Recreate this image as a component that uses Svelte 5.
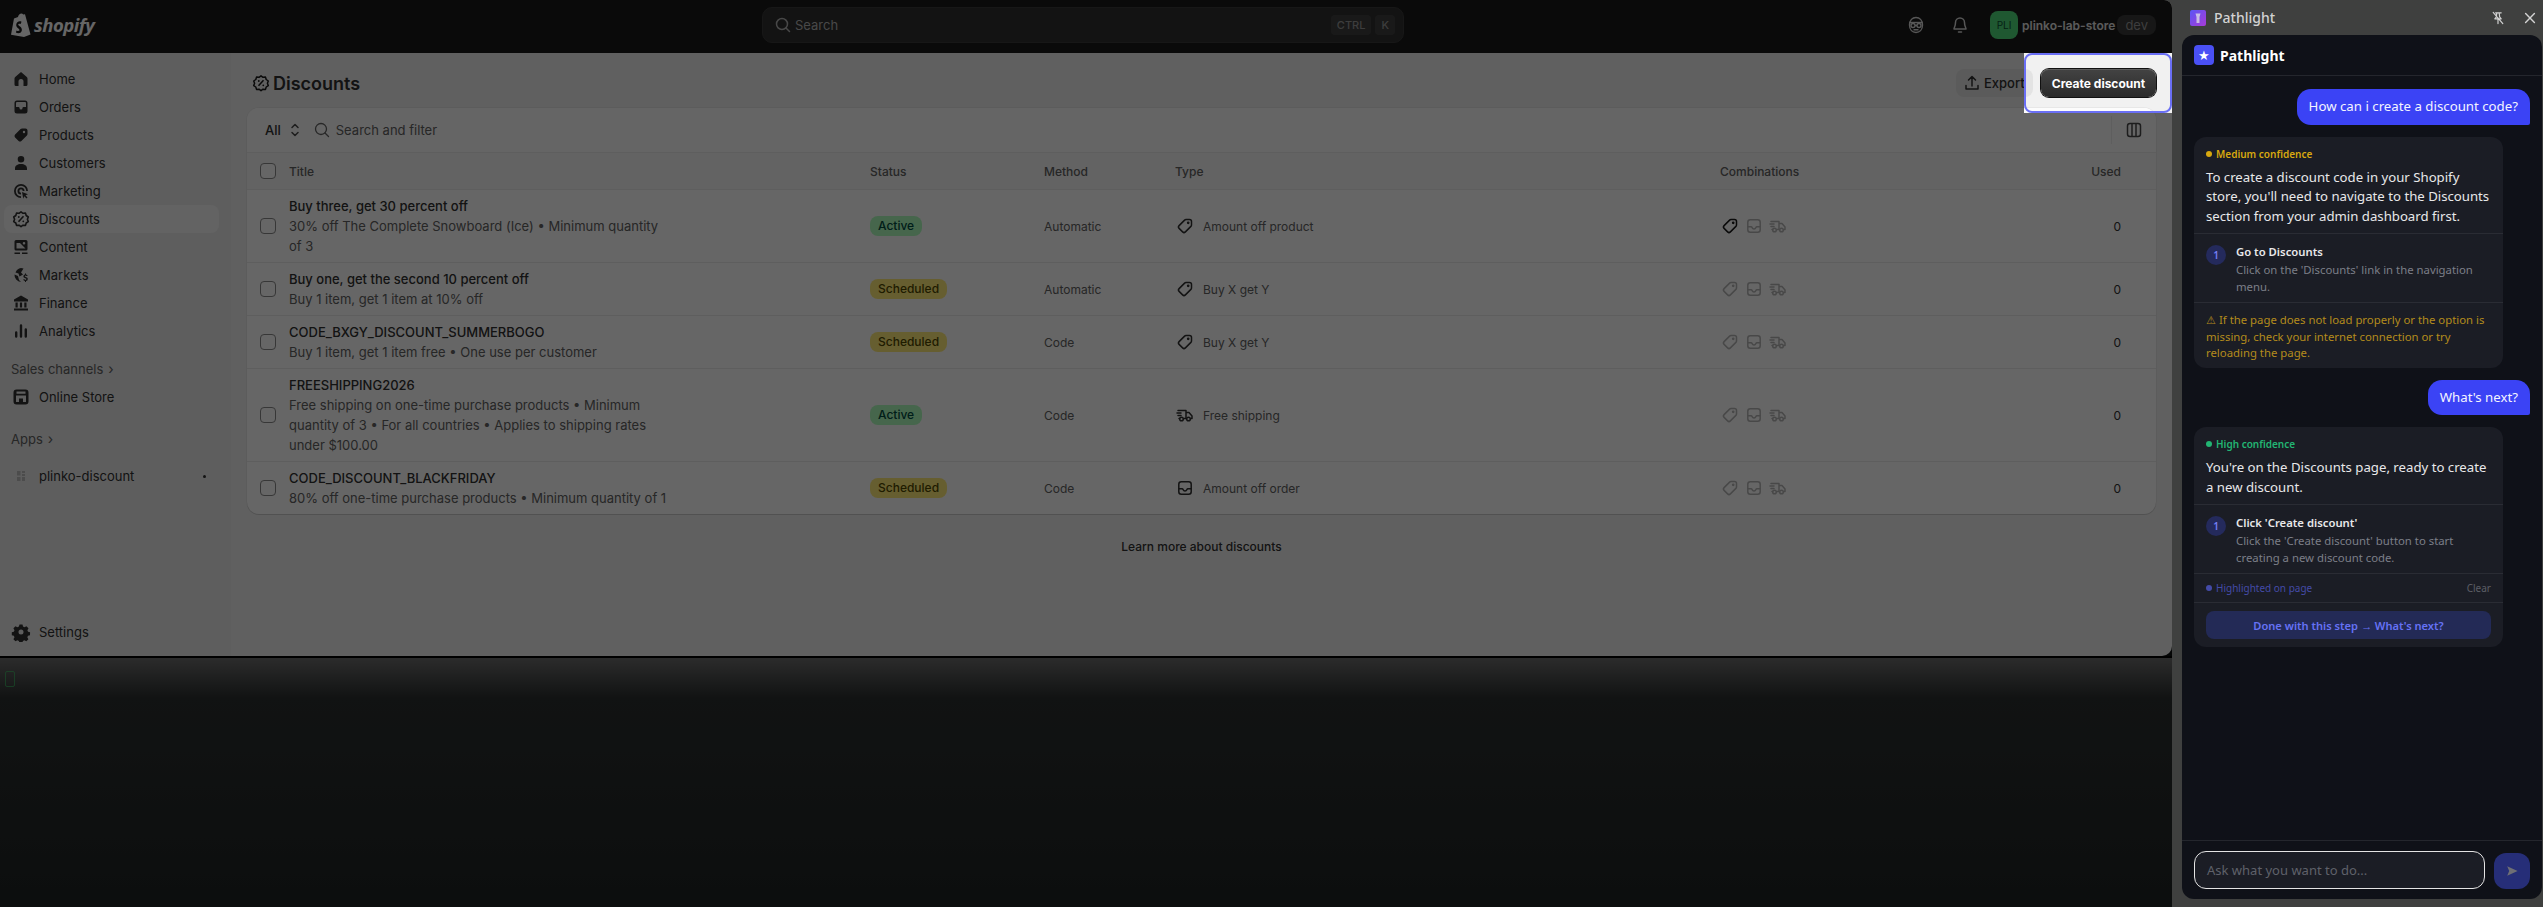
<script>
	const icons = {
		home: 'M10 3 4.2 7.9Q3.5 8.5 3.5 9.5v6Q3.5 17 5 17h2.5v-4.5a2.5 2.5 0 0 1 5 0V17H15q1.5 0 1.5-1.5v-6q0-1-.7-1.6Z',
		orders: 'M6 3.5h8A2.5 2.5 0 0 1 16.5 6v8a2.5 2.5 0 0 1-2.5 2.5H6A2.5 2.5 0 0 1 3.5 14V6A2.5 2.5 0 0 1 6 3.5ZM5 6v4h2.5a1 1 0 0 1 1 1 1.5 1.5 0 0 0 3 0 1 1 0 0 1 1-1H15V6a1 1 0 0 0-1-1H6a1 1 0 0 0-1 1Z',
		products: 'M11 3.5h3.5a2 2 0 0 1 2 2V9a2 2 0 0 1-.6 1.4l-5.5 5.5a2 2 0 0 1-2.8 0l-3.5-3.5a2 2 0 0 1 0-2.8l5.5-5.5A2 2 0 0 1 11 3.5Zm2 2.3a1.2 1.2 0 1 0 0 2.4 1.2 1.2 0 0 0 0-2.4Z',
		customers: 'M10 3a3.3 3.3 0 1 1 0 6.6A3.3 3.3 0 0 1 10 3ZM4 15.5c0-2.8 2.4-4.5 6-4.5s6 1.700 6 4.500V17H4Z',
		marketing: 'M10 3a7 7 0 0 1 7 7h-1.800A5.200 5.200 0 1 0 10 15.200V17a7 7 0 0 1 0-14Zm0 3.500A3.500 3.500 0 0 1 13.500 10h-1.800A1.700 1.700 0 1 0 10 11.700v1.800a3.500 3.500 0 0 1 0-7Zm1 4.500 6 2.200-2.500 1 2 2.300-1 1-2.200-2.200-1 2.500Z',
		discounts: 'M10 2.800 12 4.300 14.500 4.100 15.200 6.500 17.300 8 16.400 10.300 17.300 12.600 15.200 14 14.500 16.400 12 16.200 10 17.700 8 16.200 5.500 16.400 4.800 14 2.700 12.600 3.600 10.300 2.700 8 4.800 6.500 5.500 4.100 8 4.300Z',
		content: 'M5 3h10a1.500 1.500 0 0 1 1.500 1.500V12a1.500 1.500 0 0 1-1.500 1.500H5A1.500 1.500 0 0 1 3.500 12V4.500A1.500 1.500 0 0 1 5 3Zm8 2a1.300 1.300 0 1 0 0 2.600A1.300 1.300 0 0 0 13 5ZM5.500 6v5.500h9L9 6ZM3.500 15.500h5.500V17H3.500Zm7.500 0h5.500V17H11Z',
		markets: 'M10 3a7 7 0 0 1 2.500.5L10 7.500l2 2-3.500 2-1-3-3-1A7 7 0 0 1 10 3ZM3.500 9.500 7 11l1 4 2 2a7 7 0 0 1-6.500-7.500ZM15 8.500v1a2 2 0 0 1 1.700 1.500h-1.300a.8.800 0 0 0-1.500.300c0 1 2.900.800 2.900 2.700a2 2 0 0 1-1.800 2v1H14v-1a2.100 2.100 0 0 1-1.800-1.700h1.300c.4.900 1.900.800 1.900-.200s-3-.800-3-2.800a2 2 0 0 1 1.600-1.800v-1Z',
		finance: 'M10 2.500l7 4v2H3v-2ZM4.500 9.500h2.200v5H4.500Zm4.400 0h2.200v5H8.900Zm4.400 0h2.200v5h-2.200ZM3 15.500h14V17.500H3Z',
		analytics: 'M4 11.500a1.200 1.200 0 0 1 2.400 0v4a1.200 1.200 0 0 1-2.400 0Zm4.800-7a1.200 1.200 0 0 1 2.400 0v11a1.200 1.200 0 0 1-2.400 0Zm4.800 4a1.200 1.200 0 0 1 2.400 0v7a1.200 1.200 0 0 1-2.400 0Z',
		settings: 'M8.500 2.500h3l.5 2.100 1.500.7 1.900-1.100 2.100 2.100-1.100 1.900.7 1.600 2 .5-.1 3-2 .5-.7 1.500 1.100 1.900-2.100 2.100-1.900-1.100-1.500.7-.5 2h-3l-.5-2-1.500-.7-1.900 1.100-2.100-2.100 1.100-1.900-.7-1.500-2-.5v-3l2-.5.700-1.600-1.100-1.900 2.100-2.100 1.900 1.100 1.500-.7ZM10 7.500a2.500 2.500 0 1 0 0 5 2.500 2.500 0 0 0 0-5Z',
		store: 'M5.500 2.500h9a3 3 0 0 1 3 3v9a3 3 0 0 1-3 3h-9a3 3 0 0 1-3-3v-9a3 3 0 0 1 3-3Zm0 2V6.700h9V4.500Zm-.500 4v6.500h3V11.500h4V15h3V8.500Z'
	};

	const nav = [
		['Home', 'home'], ['Orders', 'orders'], ['Products', 'products'], ['Customers', 'customers'], ['Marketing', 'marketing'],
		['Discounts', 'discounts'], ['Content', 'content'], ['Markets', 'markets'], ['Finance', 'finance'], ['Analytics', 'analytics']
	];

	const discounts = [
		{ title: 'Buy three, get 30 percent off', desc: '30% off The Complete Snowboard (Ice) • Minimum quantity of 3', status: 'Active', method: 'Automatic', type: 'Amount off product', icon: 'tag', on: true },
		{ title: 'Buy one, get the second 10 percent off', desc: 'Buy 1 item, get 1 item at 10% off', status: 'Scheduled', method: 'Automatic', type: 'Buy X get Y', icon: 'tag' },
		{ title: 'CODE_BXGY_DISCOUNT_SUMMERBOGO', desc: 'Buy 1 item, get 1 item free • One use per customer', status: 'Scheduled', method: 'Code', type: 'Buy X get Y', icon: 'tag' },
		{ title: 'FREESHIPPING2026', desc: 'Free shipping on one-time purchase products • Minimum quantity of 3 • For all countries • Applies to shipping rates under $100.00', status: 'Active', method: 'Code', type: 'Free shipping', icon: 'truck' },
		{ title: 'CODE_DISCOUNT_BLACKFRIDAY', desc: '80% off one-time purchase products • Minimum quantity of 1', status: 'Scheduled', method: 'Code', type: 'Amount off order', icon: 'box' }
	];
</script>

{#snippet glyph(name)}
	<svg class="glyph" viewBox="0 0 20 20" fill="none" stroke="currentColor" stroke-width="1.5" stroke-linecap="round" stroke-linejoin="round">
		{#if name === 'tag'}
			<path d="M11 3.500h3.500a2 2 0 0 1 2 2V9a2 2 0 0 1-.6 1.400l-5.500 5.500a2 2 0 0 1-2.800 0l-3.500-3.500a2 2 0 0 1 0-2.800l5.500-5.500A2 2 0 0 1 11 3.500Z" />
			<circle cx="13.200" cy="6.800" r=".6" />
		{:else if name === 'box'}
			<rect x="3.800" y="3.800" width="12.400" height="12.400" rx="2.500" />
			<path d="M4 10.800h3c.8 0 1 .5 1.200 1 .3.800 1 1.200 1.800 1.200s1.500-.4 1.800-1.200c.2-.5.4-1 1.200-1h3" />
		{:else}
			<path d="M3 5.500h8v8M2 8h4M3 10.500h3M11 7.500h3l3 3.500v2.500h-1M11 13.500H9M4.500 13.500H4" />
			<circle cx="6.500" cy="14" r="1.800" />
			<circle cx="13.500" cy="14" r="1.800" />
		{/if}
	</svg>
{/snippet}

<div class="screen">
	<div class="desk">
		<div class="win">
			<header class="topbar">
				<div class="logo">
					<svg class="bag" viewBox="0 0 20 24">
						<path fill="#fff" d="M3 5.500 7 4c.5-2 1.800-3.500 3.500-3.500.7 0 1.300.3 1.700 1l1.800-.2L19.500 21.500 13 24 0 21.800Z" />
						<path fill="#1a1a1a" d="M10.500 8.800 9.700 11c-.8-.4-2.500-.6-2.500.6 0 1.400 3.700 2 3.700 5.300 0 2.800-3.400 4.300-6 2.700l.6-2.200c1 .7 2.900 1 3-.3 0-1.700-3.300-1.900-3.300-5 0-3 3.300-4.600 5.300-3.300Z" />
					</svg>
					<span class="wordmark">shopify</span>
				</div>
				<div class="search">
					<svg class="s-icon" viewBox="0 0 20 20" fill="none" stroke="currentColor" stroke-width="1.500" stroke-linecap="round"><circle cx="9" cy="9" r="5.500" /><path d="m13 13 3.500 3.500" /></svg>
					<span>Search</span>
					<kbd class="ctrl">CTRL</kbd>
					<kbd>K</kbd>
				</div>
				<div class="account">
					<svg class="top-ic" viewBox="0 0 20 20" fill="none" stroke="currentColor" stroke-width="1.400" stroke-linejoin="round"><path d="M10 2.500c3.500 0 6.500 2.500 6.500 7.500s-3 7.500-6.500 7.500S3.500 15 3.500 10 6.500 2.500 10 2.500Z" /><path d="M3.500 7.500h13" /><circle cx="7" cy="10.500" r="2" /><circle cx="13" cy="10.500" r="2" /><path d="M9 10.500h2M7.500 14.800h5" /></svg>
					<svg class="top-ic bell" viewBox="0 0 20 20" fill="none" stroke="currentColor" stroke-width="1.500" stroke-linecap="round" stroke-linejoin="round"><path d="M10 3a4.500 4.500 0 0 0-4.500 4.500c0 4-1.500 5-1.500 6.500h12c0-1.500-1.500-2.500-1.500-6.500A4.500 4.500 0 0 0 10 3ZM8.500 17h3" /></svg>
					<span class="avatar">PLI</span>
					<span class="store">plinko-lab-store</span>
					<span class="dev">dev</span>
				</div>
			</header>
			<div class="body">
				<aside class="sidebar">
					{#each nav as [label, icon]}
						<div class="nav-item" class:active={label === 'Discounts'}>
							{#if icon === 'discounts'}
								<svg class="nav-ic" viewBox="0 0 20 20" fill="none" stroke="currentColor" stroke-width="1.600" stroke-linejoin="round"><path d={icons[icon]} /><path d="m7.500 12.800 5-5.500" /><circle cx="7.800" cy="8" r=".9" fill="currentColor" stroke="none" /><circle cx="12.300" cy="12.300" r=".9" fill="currentColor" stroke="none" /></svg>
							{:else}
								<svg class="nav-ic" viewBox="0 0 20 20" fill="currentColor" fill-rule="evenodd"><path d={icons[icon]} /></svg>
							{/if}
							{label}
						</div>
					{/each}
					<div class="side-label first">Sales channels <span class="chev">›</span></div>
					<div class="nav-item">
						<svg class="nav-ic" viewBox="0 0 20 20" fill="currentColor" fill-rule="evenodd"><path d={icons.store} /></svg>
						Online Store
					</div>
					<div class="side-label">Apps <span class="chev">›</span></div>
					<div class="nav-item app">
						<svg class="nav-ic faint" viewBox="0 0 20 20" fill="currentColor"><path d="M6 5h3.500v4.500H6Zm5 0h3v2h-3Zm0 3h3v2h-3ZM6 11h3.500v4H6Zm5 0h3v4h-3Z" /></svg>
						plinko-discount
						<span class="app-dot"></span>
					</div>
					<div class="nav-item settings">
						<svg class="nav-ic" viewBox="0 0 20 20" fill="currentColor" fill-rule="evenodd"><path d={icons.settings} /></svg>
						Settings
					</div>
				</aside>
				<main class="main">
					<div class="page-head">
						<svg class="title-ic" viewBox="0 0 20 20" fill="none" stroke="currentColor" stroke-width="1.500" stroke-linejoin="round"><path d={icons.discounts} /><path d="m7.500 12.800 5-5.500" /><circle cx="7.800" cy="8" r=".9" fill="currentColor" stroke="none" /><circle cx="12.300" cy="12.300" r=".9" fill="currentColor" stroke="none" /></svg>
						<h1>Discounts</h1>
						<button class="export">
							<svg viewBox="0 0 20 20" fill="none" stroke="currentColor" stroke-width="1.500" stroke-linecap="round" stroke-linejoin="round"><path d="M10 13V3.500M6.500 7 10 3.500 13.500 7M4 12.500V16h12v-3.500" /></svg>
							Export
						</button>
						<button class="create">Create discount</button>
					</div>
					<section class="card">
						<div class="filters">
							<span class="all">All</span>
							<svg class="sort" viewBox="0 0 20 20" fill="none" stroke="currentColor" stroke-width="1.500" stroke-linecap="round" stroke-linejoin="round"><path d="m7 7.500 3-3 3 3M7 12.500l3 3 3-3" /></svg>
							<svg class="f-search" viewBox="0 0 20 20" fill="none" stroke="currentColor" stroke-width="1.300" stroke-linecap="round"><circle cx="9" cy="9" r="5.500" /><path d="m13 13 3.500 3.500" /></svg>
							<span class="placeholder">Search and filter</span>
							<span class="f-div"></span>
							<svg class="cols" viewBox="0 0 20 20" fill="none" stroke="currentColor" stroke-width="1.500"><rect x="3.500" y="3.500" width="13" height="13" rx="2.500" /><path d="M8 3.500v13M12 3.500v13" /></svg>
						</div>
						<div class="row head">
							<span class="box"></span>
							<span>Title</span>
							<span>Status</span>
							<span>Method</span>
							<span>Type</span>
							<span>Combinations</span>
							<span class="used">Used</span>
						</div>
						{#each discounts as d}
							<div class="row">
								<span class="box"></span>
								<div class="info">
									<div class="d-title">{d.title}</div>
									<div class="d-desc">{d.desc}</div>
								</div>
								<div><span class="badge {d.status.toLowerCase()}">{d.status}</span></div>
								<div class="muted">{d.method}</div>
								<div class="type">{@render glyph(d.icon)}{d.type}</div>
								<div class="combos">
									<span class:on={d.on}>{@render glyph('tag')}</span>
									<span>{@render glyph('box')}</span>
									<span>{@render glyph('truck')}</span>
								</div>
								<div class="used count">0</div>
							</div>
						{/each}
					</section>
					<div class="learn">Learn more about discounts</div>
				</main>
			</div>
		</div>
		<div class="backdrop">
			<span class="term"></span>
		</div>
		<div class="overlay"></div>
		<div class="ring"></div>
	</div>

	<aside class="panel">
		<div class="panel-bar">
			<span class="app-ic">
				<svg viewBox="0 0 16 16" fill="#d9d9e6"><path d="M5.500 3.500h5L9.500 7v6h-3V7Z" opacity=".8" /></svg>
			</span>
			<span class="app-name">Pathlight</span>
			<svg class="pin" viewBox="0 0 20 20" fill="none" stroke="currentColor" stroke-width="1.500" stroke-linecap="round" stroke-linejoin="round"><path d="M7 3.500h7M8.500 3.500l-.5 5-2 2.500h8l-2-2.500-.5-5M10 11v6M4 3l12 14" /></svg>
			<svg class="close" viewBox="0 0 20 20" fill="none" stroke="currentColor" stroke-width="1.800" stroke-linecap="round"><path d="m4.500 4.500 11 11m0-11-11 11" /></svg>
		</div>
		<div class="chat">
			<div class="chat-head">
				<span class="star">★</span>
				<strong>Pathlight</strong>
			</div>
			<div class="messages">
				<div class="bubble">How can i create a discount code?</div>
				<div class="reply">
					<div class="reply-top">
						<div class="conf medium"><i></i>Medium confidence</div>
						<p>To create a discount code in your Shopify store, you'll need to navigate to the Discounts section from your admin dashboard first.</p>
					</div>
					<div class="step">
						<span class="num">1</span>
						<div>
							<div class="step-title">Go to Discounts</div>
							<div class="step-desc">Click on the 'Discounts' link in the navigation menu.</div>
						</div>
					</div>
					<div class="warn">⚠ If the page does not load properly or the option is missing, check your internet connection or try reloading the page.</div>
				</div>
				<div class="bubble">What's next?</div>
				<div class="reply">
					<div class="reply-top">
						<div class="conf high"><i></i>High confidence</div>
						<p>You're on the Discounts page, ready to create a new discount.</p>
					</div>
					<div class="step">
						<span class="num">1</span>
						<div>
							<div class="step-title">Click 'Create discount'</div>
							<div class="step-desc">Click the 'Create discount' button to start creating a new discount code.</div>
						</div>
					</div>
					<div class="lit"><i></i>Highlighted on page<span>Clear</span></div>
					<div class="done-wrap"><button class="done">Done with this step → What's next?</button></div>
				</div>
			</div>
			<div class="composer">
				<div class="input">Ask what you want to do...</div>
				<button class="send" aria-label="Send">
					<svg viewBox="0 0 20 20" fill="currentColor"><path d="M4 4 17 10 4 16 6.500 10Z" /></svg>
				</button>
			</div>
		</div>
	</aside>
</div>

<style>
	:global(body) {
		margin: 0;
		background: #3f403f;
	}

	.screen {
		display: flex;
		width: 2543px;
		height: 907px;
		overflow: hidden;
		font-family: Inter, "Liberation Sans", sans-serif;
		font-size: 13px;
		color: #303030;
	}

	.desk {
		position: relative;
		display: flex;
		flex-direction: column;
		flex: 0 0 2172px;
		background: #0d0f0f;
		border-radius: 0 8px 0 0;
		overflow: hidden;
	}

	.win {
		display: flex;
		flex-direction: column;
		height: 656px;
		background: #f1f1f1;
		border-radius: 0 0 10px 0;
		overflow: hidden;
	}

	.topbar {
		display: flex;
		align-items: center;
		flex: 0 0 53px;
		box-sizing: border-box;
		padding-bottom: 3px;
		background: #1a1a1a;
		color: #e3e3e3;
	}

	.logo {
		display: flex;
		align-items: center;
		gap: 3px;
		flex: 0 0 762px;
		padding-left: 11px;
		box-sizing: border-box;
		color: #fff;
	}

	.bag {
		width: 20px;
		height: 24px;
	}

	.wordmark {
		font-family: "Open Sans", sans-serif;
		font-size: 18.500px;
		font-weight: 700;
		font-style: italic;
		letter-spacing: -0.5px;
		position: relative;
		top: -1px;
	}

	.search {
		display: flex;
		align-items: center;
		gap: 2px;
		flex: 0 0 642px;
		height: 36px;
		box-sizing: border-box;
		padding: 0 8px 0 10px;
		border: 1px solid #3a3a3a;
		border-radius: 10px;
		background: #303030;
		color: #b5b5b5;
	}

	.s-icon {
		width: 20px;
		height: 20px;
	}

	.search kbd {
		font: 500 11px Inter, sans-serif;
		background: #404040;
		border-radius: 4px;
		padding: 4px 6px;
		margin-left: 2px;
		color: #999;
		height: 12px;
		line-height: 12px;
	}

	.search .ctrl {
		margin-left: auto;
	}

	.account {
		display: flex;
		align-items: center;
		flex: 1;
		min-width: 0;
		padding-right: 16px;
	}

	.top-ic {
		flex: none;
		width: 20px;
		height: 20px;
		margin-left: 502px;
		color: #d9d9d9;
	}

	.top-ic.bell {
		margin-left: 24px;
	}

	.avatar {
		display: flex;
		align-items: center;
		justify-content: center;
		flex: none;
		width: 28px;
		height: 28px;
		margin-left: 20px;
		border-radius: 8px;
		background: #4fdc7c;
		font-size: 10px;
		color: #0c5132;
	}

	.store {
		margin-left: 4px;
		font-weight: 600;
		font-size: 12px;
		white-space: nowrap;
		color: #e3e3e3;
	}

	.dev {
		flex: none;
		margin-left: auto;
		padding: 0 8px;
		height: 20px;
		line-height: 20px;
		border-radius: 8px;
		background: #3a3a3a;
		color: #999;
		font-size: 13px;
	}

	.body {
		display: flex;
		flex: 1;
		min-height: 0;
	}

	.sidebar {
		display: flex;
		flex-direction: column;
		flex: 0 0 231px;
		box-sizing: border-box;
		padding: 12px 12px 10px 4px;
		background: #ebebeb;
	}

	.nav-item {
		position: relative;
		display: flex;
		align-items: center;
		gap: 8px;
		flex: 0 0 28px;
		padding-left: 7px;
		border-radius: 8px;
	}

	.nav-item.active {
		background: #f7f7f7;
	}

	.nav-ic {
		width: 20px;
		height: 20px;
		color: #303030;
	}

	.nav-ic.faint {
		color: #bdbdbd;
	}

	.side-label {
		display: flex;
		align-items: center;
		gap: 5px;
		height: 20px;
		margin: 18px 0 4px 7px;
		font-size: 13px;
		color: #616161;
	}

	.side-label.first {
		margin-top: 14px;
	}

	.side-label + .nav-item.app {
		margin-top: 9px;
	}

	.chev {
		font-size: 14px;
		line-height: 1;
	}

	.app-dot {
		position: absolute;
		left: 199px;
		top: 13px;
		width: 3px;
		height: 3px;
		border-radius: 50%;
		background: #303030;
	}

	.settings {
		margin-top: auto;
	}

	.main {
		flex: 1;
		padding: 0 16px;
		min-width: 0;
	}

	.page-head {
		display: flex;
		align-items: center;
		height: 55px;
		padding: 16px 0 11px 4px;
		box-sizing: border-box;
	}

	.title-ic {
		width: 20px;
		height: 20px;
		color: #1a1a1a;
	}

	h1 {
		margin: 0 auto 0 2px;
		font-size: 18px;
		font-weight: 600;
		color: #303030;
	}

	button {
		font-family: inherit;
		border: 0;
	}

	.export {
		display: flex;
		align-items: center;
		gap: 2px;
		width: 77px;
		height: 28px;
		padding: 0 0 0 6px;
		border-radius: 8px;
		background: #e3e3e3;
		color: #303030;
		font-size: 13px;
		font-weight: 500;
	}

	.export svg {
		width: 20px;
		height: 20px;
	}

	.create {
		width: 115px;
		height: 28px;
		margin-left: 8px;
		border-radius: 8px;
		background: linear-gradient(#434343, #2b2b2b);
		box-shadow: 0 0 0 1px #111, inset 0 1px 0 #5c5c5c;
		color: #fff;
		font-size: 12px;
		font-weight: 650;
	}

	.card {
		background: #fff;
		border-radius: 12px;
		box-shadow: 0 0 0 1px rgba(0, 0, 0, 0.04), 0 1px 0 rgba(0, 0, 0, 0.12);
		overflow: hidden;
	}

	.filters {
		display: flex;
		align-items: center;
		height: 45px;
		box-sizing: border-box;
		padding: 0 12px 0 18px;
		background: #fcfcfc;
		border-bottom: 1px solid #ebebeb;
	}

	.all {
		font-weight: 500;
	}

	.sort {
		width: 20px;
		height: 20px;
		margin-left: 4px;
		color: #4a4a4a;
	}

	.f-search {
		width: 20px;
		height: 20px;
		margin-left: 7px;
		color: #616161;
	}

	.placeholder {
		margin-left: 4px;
		color: #616161;
	}

	.f-div {
		height: 28px;
		width: 1px;
		margin: 0 12px 0 auto;
		background: #ebebeb;
	}

	.cols {
		width: 20px;
		height: 20px;
		color: #4a4a4a;
	}

	.row {
		display: grid;
		grid-template-columns: 29px 581px 174px 131px 545px 200px 1fr;
		align-items: center;
		padding: 6px 35px 6px 13px;
		border-bottom: 1px solid #ebebeb;
		box-sizing: border-box;
	}

	.row:last-child {
		border-bottom: 0;
	}

	.row.head {
		height: 37px;
		padding-top: 0;
		padding-bottom: 0;
		background: #f7f7f7;
		font-size: 12px;
		font-weight: 550;
		color: #616161;
	}

	.used {
		text-align: right;
	}

	.count {
		font-size: 12px;
	}

	.box {
		width: 16px;
		height: 16px;
		box-sizing: border-box;
		border: 1px solid #8a8a8a;
		border-radius: 4px;
		background: #fff;
	}

	.info {
		max-width: 382px;
		line-height: 20px;
	}

	.d-title {
		font-weight: 550;
		color: #303030;
	}

	.d-desc {
		color: #616161;
	}

	.badge {
		display: inline-block;
		vertical-align: middle;
		padding: 0 8px;
		height: 20px;
		line-height: 20px;
		border-radius: 8px;
		font-size: 12px;
		font-weight: 500;
	}

	.badge.active {
		background: #affebf;
		color: #014b40;
	}

	.badge.scheduled {
		background: #ffeb78;
		color: #4f4700;
	}

	.muted {
		font-size: 12px;
		color: #616161;
	}

	.type {
		display: flex;
		align-items: center;
		gap: 8px;
		font-size: 12px;
		color: #616161;
	}

	.glyph {
		width: 20px;
		height: 20px;
		display: block;
	}

	.type .glyph {
		color: #303030;
	}

	.combos {
		display: flex;
		gap: 4px;
		color: #b5b5b5;
	}

	.combos .on {
		color: #1a1a1a;
	}

	.learn {
		margin-top: 25px;
		text-align: center;
		font-size: 12px;
		font-weight: 550;
		color: #303030;
	}

	.backdrop {
		flex: 1;
		position: relative;
		border-top: 2px solid #000;
		background: linear-gradient(#6d6d6d, #2c3030 16%, #1f2424 100%);
	}

	.term {
		position: absolute;
		left: 5px;
		top: 13px;
		width: 8px;
		height: 14px;
		border: 1px solid #3fd06a;
		border-radius: 2px;
		opacity: 0.6;
	}

	.overlay {
		position: absolute;
		inset: 0;
		background: rgba(0, 0, 0, 0.6);
		clip-path: polygon(evenodd, 0 0, 2172px 0, 2172px 907px, 0 907px, 0 0, 2024px 53px, 2024px 113px, 2172px 113px, 2172px 53px, 2024px 53px);
	}

	.ring {
		position: absolute;
		left: 2024px;
		top: 53px;
		width: 148px;
		height: 60px;
		box-sizing: border-box;
		border: 2px solid #6a6ff5;
		border-radius: 8px;
		pointer-events: none;
	}

	.panel {
		flex: 1;
		display: flex;
		flex-direction: column;
		min-width: 0;
		padding: 0 1px 8px 10px;
		background: #3f403f;
		font-family: "Noto Sans", "Open Sans", sans-serif;
		color: #e8e8ea;
	}

	.panel-bar {
		display: flex;
		align-items: center;
		flex: 0 0 35px;
		padding: 0 4px 0 8px;
		color: #d2d2d2;
	}

	.app-ic {
		display: block;
		width: 16px;
		height: 16px;
		border-radius: 2px;
		background: linear-gradient(135deg, #5a55f5, #a93bd8);
	}

	.app-ic svg {
		display: block;
	}

	.app-name {
		margin-left: 8px;
		font-size: 14px;
		font-weight: 500;
		margin-right: auto;
	}

	.pin {
		width: 16px;
		height: 16px;
	}

	.close {
		width: 16px;
		height: 16px;
		margin-left: 16px;
	}

	.chat {
		flex: 1;
		display: flex;
		flex-direction: column;
		min-height: 0;
		border-radius: 12px;
		background: #0f1118;
	}

	.chat-head {
		display: flex;
		align-items: center;
		gap: 6px;
		flex: 0 0 41px;
		box-sizing: border-box;
		padding-left: 12px;
		border-bottom: 1px solid #24262d;
		font-size: 14px;
		color: #fff;
	}

	.star {
		display: flex;
		align-items: center;
		justify-content: center;
		width: 20px;
		height: 20px;
		border-radius: 4px;
		background: #4a50f5;
		color: #fff;
		font-size: 13px;
		line-height: 1;
	}

	.messages {
		flex: 1;
		display: flex;
		flex-direction: column;
		align-items: flex-start;
		gap: 12px;
		padding: 13px 12px;
		min-height: 0;
	}

	.bubble {
		align-self: flex-end;
		padding: 8px 12px;
		border-radius: 14px 14px 2px 14px;
		background: #3b43f5;
		color: #f4f4ff;
		font-size: 13.250px;
		line-height: 19.500px;
	}

	.reply {
		width: 309px;
		border-radius: 12px;
		background: #1b1d25;
	}

	.reply-top {
		padding: 11px 12px 7px;
		border-bottom: 1px solid #2a2c34;
	}

	.conf {
		display: flex;
		align-items: center;
		gap: 4px;
		height: 12px;
		margin-bottom: 8px;
		font-size: 10px;
		font-weight: 600;
	}

	.conf i,
	.lit i {
		width: 6px;
		height: 6px;
		border-radius: 50%;
		background: currentColor;
	}

	.conf.medium {
		color: #d8a80f;
	}

	.conf.high {
		color: #22b573;
	}

	p {
		margin: 0;
		font-size: 13.200px;
		line-height: 19.500px;
		color: #e8e8ea;
	}

	.step {
		display: flex;
		gap: 10px;
		padding: 10px 12px 7px;
		border-bottom: 1px solid #2a2c34;
	}

	.num {
		display: flex;
		align-items: center;
		justify-content: center;
		flex: 0 0 20px;
		height: 20px;
		margin-top: 1px;
		border-radius: 50%;
		background: #242a5c;
		color: #7480f5;
		font-size: 10px;
		font-weight: 600;
	}

	.step-title {
		font-size: 11.300px;
		font-weight: 600;
		line-height: 16px;
		color: #e8e8ea;
		margin-bottom: 2px;
	}

	.step-desc {
		font-size: 11.350px;
		line-height: 16.500px;
		color: #7c7f88;
	}

	.warn {
		padding: 9px 12px 6px;
		font-size: 11.350px;
		line-height: 16.500px;
		color: #b38b1c;
	}

	.lit {
		display: flex;
		align-items: center;
		gap: 4px;
		height: 29px;
		box-sizing: border-box;
		padding: 0 12px;
		border-bottom: 1px solid #2a2c34;
		font-size: 10px;
		color: #444ba8;
	}

	.lit span {
		margin-left: auto;
		color: #5b5d66;
	}

	.done-wrap {
		padding: 8px 12px;
	}

	.done {
		display: block;
		width: 100%;
		height: 28px;
		border-radius: 8px;
		background: #232a56;
		color: #6672f5;
		font-family: inherit;
		font-size: 11.100px;
		font-weight: 600;
	}

	.composer {
		display: flex;
		align-items: flex-end;
		gap: 9px;
		padding: 10px 12px;
		border-top: 1px solid #24262d;
	}

	.input {
		flex: 1;
		height: 38px;
		box-sizing: border-box;
		padding: 0 12px;
		line-height: 36px;
		border: 1px solid #e4e4e4;
		border-radius: 12px;
		background: #1b1d25;
		color: #5f616a;
		font-size: 13px;
	}

	.send {
		display: flex;
		align-items: center;
		justify-content: center;
		flex: 0 0 36px;
		height: 36px;
		padding: 0;
		border-radius: 12px;
		background: #262e78;
		color: #6f6f75;
	}

	.send svg {
		width: 16px;
		height: 16px;
	}
</style>
